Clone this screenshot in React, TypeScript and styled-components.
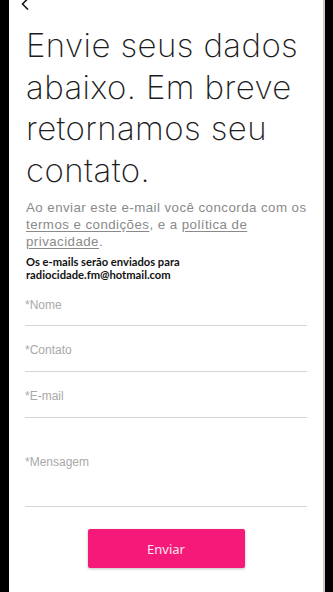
import React from 'react'
import styled, { createGlobalStyle } from 'styled-components'

const GlobalStyle = createGlobalStyle`
  html, body {
    margin: 0;
    padding: 0;
    background: #000;
  }
  body {
    font-family: Inter, 'Noto Sans', sans-serif;
  }
`

const Screen = styled.div`
  display: flex;
  min-height: 592px;
  padding-left: 9px;
`

const Panel = styled.div`
  width: 316px;
  min-height: 592px;
  background: #fff;
  border-right: 2px solid #c9c9cc;
  box-sizing: border-box;
  padding: 0 16px;
  overflow: hidden;
`

const BackButton = styled.button`
  display: block;
  margin: -2px 0 0 -4px;
  padding: 0;
  border: none;
  background: none;
  width: 10px;
  height: 12px;
  color: #1a1a1a;

  svg {
    display: block;
  }
`

const Title = styled.h1`
  margin: 15px 0 0 1px;
  font-family: Inter, sans-serif;
  font-weight: 250;
  font-size: 33px;
  line-height: 41.5px;
  letter-spacing: 0.4px;
  color: #1c1c1c;
`

const Terms = styled.p`
  margin: 8px 0 0 1px;
  font-family: 'Liberation Sans', Arial, sans-serif;
  font-size: 13.3px;
  line-height: 17px;
  letter-spacing: 0.45px;
  color: #8a8a8a;

  a {
    color: #8a8a8a;
    text-decoration: underline;
    text-underline-offset: 2px;
  }
`

const Notice = styled.p`
  margin: 6px 0 0 1px;
  font-family: Lato, sans-serif;
  font-weight: 700;
  font-size: 11.2px;
  line-height: 12.5px;
  color: #111;
`

const Form = styled.form`
  display: flex;
  flex-direction: column;
`

const Field = styled.label<{ $height: number; $pad?: number }>`
  display: block;
  height: ${(p) => p.$height}px;
  padding-top: ${(p) => p.$pad ?? 17}px;
  border-bottom: 1.5px solid #d6d6d8;
  box-sizing: border-box;
  font-family: 'Liberation Sans', Arial, sans-serif;
  font-size: 12px;
  line-height: 14px;
  color: #a9a9a9;
`

const SubmitButton = styled.button`
  align-self: center;
  margin-top: 22px;
  width: 157px;
  height: 39px;
  border: none;
  border-radius: 2px;
  background: #f51a7a;
  color: #fde4ef;
  font-family: 'Noto Sans', sans-serif;
  font-size: 13px;
  box-shadow: 0 1px 3px rgba(0, 0, 0, 0.25);
`

export default function App() {
  return (
    <>
      <GlobalStyle />
      <Screen>
        <Panel>
          <BackButton aria-label='Voltar'>
            <svg width='10' height='12' viewBox='0 0 10 12'>
              <path
                d='M7 0.5 L1.5 6 L7 11.5'
                fill='none'
                stroke='currentColor'
                strokeWidth='1.6'
              />
            </svg>
          </BackButton>
          <Title>
            Envie seus dados abaixo. Em breve retornamos seu contato.
          </Title>
          <Terms>
            Ao enviar este e-mail você concorda com os{' '}
            <a href='#'>termos e condições</a>, e a{' '}
            <a href='#privacidade'>política de</a>{' '}
            <a href='#privacidade'>privacidade</a>.
          </Terms>
          <Notice>
            Os e-mails serão enviados para
            <br />
            radiocidade.fm@hotmail.com
          </Notice>
          <Form>
            <Field $height={45}>*Nome</Field>
            <Field $height={46}>*Contato</Field>
            <Field $height={46}>*E-mail</Field>
            <Field $height={89} $pad={37}>
              *Mensagem
            </Field>
            <SubmitButton type='button'>Enviar</SubmitButton>
          </Form>
        </Panel>
      </Screen>
    </>
  )
}
